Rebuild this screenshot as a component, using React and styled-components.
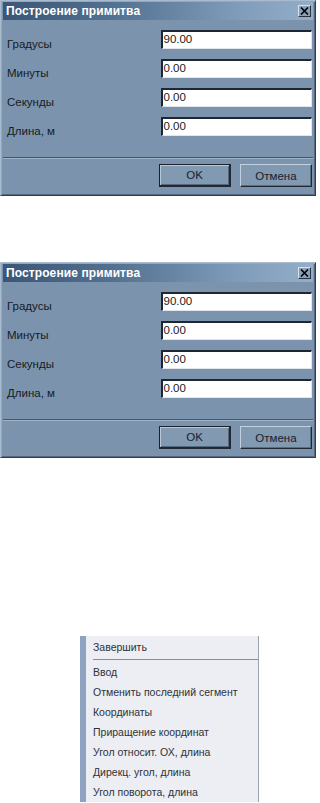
import React from "react";
import styled, { createGlobalStyle } from "styled-components";

const Global = createGlobalStyle`
  html, body { margin: 0; padding: 0; background: #ffffff; }
  body { font-family: "Liberation Sans", Arial, sans-serif; overflow: hidden; }
`;

const Page = styled.div`
  width: 320px;
  height: 803px;
  display: flex;
  flex-direction: column;
  overflow: hidden;
`;

const Window = styled.div`
  box-sizing: border-box;
  width: 316px;
  height: 196px;
  margin-left: 0px;
  margin-top: ${(p) => p.$top}px;
  background: #7c93ad;
  border-top: 1px solid #a9bbcf;
  border-left: 1px solid #a9bbcf;
  border-right: 1px solid #2f3e52;
  border-bottom: 1px solid #2f3e52;
  box-shadow: inset 1px 1px 0 #93a8bf, inset -1px -1px 0 #56687f;
  padding: 1px 2px 2px 2px;
  display: flex;
  flex-direction: column;
`;

const TitleBar = styled.div`
  height: 18px;
  flex: none;
  display: flex;
  align-items: center;
  justify-content: space-between;
  padding: 0 2px 0 3px;
  background: linear-gradient(90deg, #3b5677 0%, #52708f 35%, #7e9bb9 75%, #94aec8 100%);
`;

const Title = styled.span`
  color: #ffffff;
  font-weight: bold;
  font-size: 12px;
  letter-spacing: 0.1px;
`;

const CloseBtn = styled.div`
  box-sizing: border-box;
  width: 13px;
  height: 12px;
  background: #8aa0b8;
  border-top: 1px solid #d5e0ea;
  border-left: 1px solid #d5e0ea;
  border-right: 1px solid #27323f;
  border-bottom: 1px solid #27323f;
  display: flex;
  align-items: center;
  justify-content: center;
`;

const Body = styled.div`
  display: flex;
  flex-direction: column;
  gap: 10px;
  padding: 10px 1px 0 4px;
`;

const Row = styled.div`
  display: flex;
  align-items: center;
  height: 19px;
`;

const Label = styled.span`
  width: 155px;
  font-size: 11.5px;
  color: #141c26;
  padding-top: 9px;
`;

const Input = styled.div`
  box-sizing: border-box;
  width: 151px;
  height: 19px;
  background: #ffffff;
  border-top: 2px solid #1e2631;
  border-left: 2px solid #1e2631;
  border-right: 1px solid #dfe6ee;
  border-bottom: 1px solid #dfe6ee;
  font-size: 11.5px;
  color: #1a1a1a;
  line-height: 15px;
  padding-left: 0px;
`;

const Separator = styled.div`
  margin-top: 21px;
  height: 0;
  border-top: 1px solid #44566d;
  border-bottom: 1px solid #9fb2c6;
`;

const Footer = styled.div`
  display: flex;
  justify-content: flex-end;
  gap: 9px;
  padding: 5px 1px 0 0;
`;

const Button = styled.div`
  box-sizing: border-box;
  width: ${(p) => p.$w}px;
  height: 23px;
  display: flex;
  align-items: center;
  justify-content: center;
  font-size: 11.5px;
  color: #18202b;
  background: #8299b2;
  border-top: 1px solid ${(p) => (p.$def ? "#1a222c" : "#c3d1de")};
  border-left: 1px solid ${(p) => (p.$def ? "#1a222c" : "#c3d1de")};
  border-right: ${(p) => (p.$def ? 2 : 1)}px solid #1f2833;
  border-bottom: ${(p) => (p.$def ? 2 : 1)}px solid #1f2833;
  box-shadow: ${(p) =>
    p.$def
      ? "inset 1px 1px 0 #b9c8d7, inset -1px -1px 0 #56687f"
      : "inset -1px -1px 0 #5b6d84"};
`;

const Menu = styled.div`
  margin-top: 178px;
  margin-left: 80px;
  width: 178px;
  display: flex;
  background: #eceef3;
  border-right: 1px solid #9ea3ab;
  flex: none;
`;

const Strip = styled.div`
  width: 6px;
  flex: none;
  background: #8ea3bf;
`;

const MenuList = styled.div`
  flex: 1;
  display: flex;
  flex-direction: column;
  padding-top: 1px;
`;

const MenuItem = styled.div`
  height: 20px;
  display: flex;
  align-items: center;
  padding-left: 7px;
  font-size: 10.5px;
  color: #2e3238;
  white-space: nowrap;
`;

const MenuSep = styled.div`
  height: 5px;
  display: flex;
  align-items: center;
  padding-left: 7px;
  &::after {
    content: "";
    flex: 1;
    height: 1px;
    background: #8a8f97;
  }
`;

const fields = [
  ["Градусы", "90.00"],
  ["Минуты", "0.00"],
  ["Секунды", "0.00"],
  ["Длина, м", "0.00"],
];

function Dialog({ top }) {
  return (
    <Window $top={top}>
      <TitleBar>
        <Title>Построение примитва</Title>
        <CloseBtn>
          <svg width="9" height="8" viewBox="0 0 9 8">
            <path d="M1 0.5 L8 7.5 M8 0.5 L1 7.5" stroke="#000" strokeWidth="1.6" />
          </svg>
        </CloseBtn>
      </TitleBar>
      <Body>
        {fields.map(([l, v]) => (
          <Row key={l}>
            <Label>{l}</Label>
            <Input>{v}</Input>
          </Row>
        ))}
      </Body>
      <Separator />
      <Footer>
        <Button $w={72} $def>
          OK
        </Button>
        <Button $w={72}>Отмена</Button>
      </Footer>
    </Window>
  );
}

const items = [
  "Ввод",
  "Отменить последний сегмент",
  "Координаты",
  "Приращение координат",
  "Угол относит. ОХ, длина",
  "Дирекц.  угол, длина",
  "Угол поворота, длина",
];

export default function App() {
  return (
    <Page>
      <Global />
      <Dialog top={0} />
      <Dialog top={66} />
      <Menu>
        <Strip />
        <MenuList>
          <MenuItem>Завершить</MenuItem>
          <MenuSep />
          {items.map((t) => (
            <MenuItem key={t}>{t}</MenuItem>
          ))}
        </MenuList>
      </Menu>
    </Page>
  );
}
